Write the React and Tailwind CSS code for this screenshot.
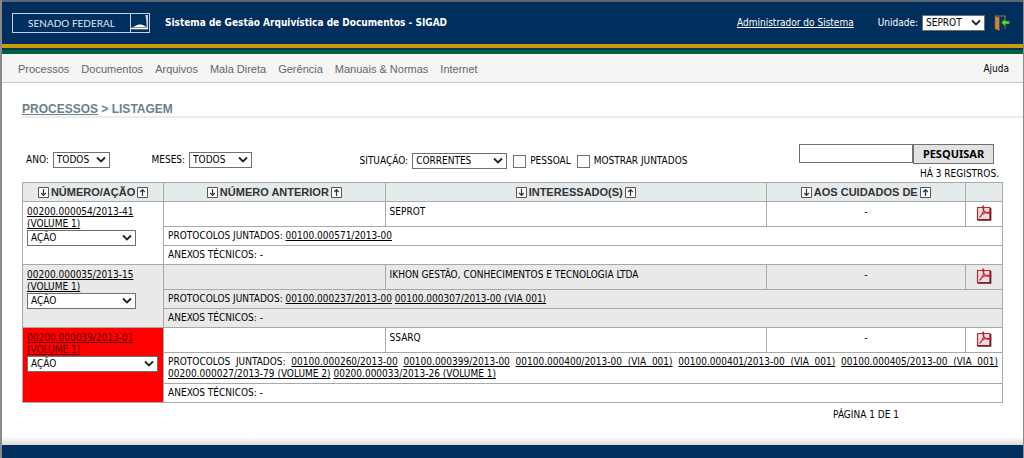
import React, { useState } from 'react';

const menuItems = ['Processos', 'Documentos', 'Arquivos', 'Mala Direta', 'Gerência', 'Manuais & Normas', 'Internet'];

const columns = ['NÚMERO/AÇÃO', 'NÚMERO ANTERIOR', 'INTERESSADO(S)', 'AOS CUIDADOS DE'];

const processos = [
  {
    numero: '00200.000054/2013-41',
    volume: '(VOLUME 1)',
    interessado: 'SEPROT',
    juntados: ['00100.000571/2013-00'],
  },
  {
    numero: '00200.000035/2013-15',
    volume: '(VOLUME 1)',
    interessado: 'IKHON GESTÃO, CONHECIMENTOS E TECNOLOGIA LTDA',
    juntados: ['00100.000237/2013-00', '00100.000307/2013-00 (VIA 001)'],
    shaded: true,
  },
  {
    numero: '00200.000039/2013-01',
    volume: '(VOLUME 1)',
    interessado: 'SSARQ',
    juntados: [
      '00100.000260/2013-00',
      '00100.000399/2013-00',
      '00100.000400/2013-00 (VIA 001)',
      '00100.000401/2013-00 (VIA 001)',
      '00100.000405/2013-00 (VIA 001)',
      '00200.000027/2013-79 (VOLUME 2)',
      '00200.000033/2013-26 (VOLUME 1)',
    ],
    urgent: true,
  },
];

const Select = ({ id, label, value, className }) => (
  <span className={`relative inline-block h-4 align-top ${className}`}>
    <select
      id={id}
      aria-label={label}
      defaultValue={value}
      className="block h-full w-full appearance-none border border-[#707070] bg-white pl-[3px] text-[10px] leading-[14px] text-black"
    >
      <option>{value}</option>
    </select>
    <svg className="pointer-events-none absolute top-1 right-1 h-2 w-[10px]" viewBox="0 0 10 8" fill="none">
      <path d="M1 1.5 5 5.5 9 1.5" stroke="#222" strokeWidth="1.8" />
    </svg>
  </span>
);

const SenadoLogo = () => (
  <div className="flex h-5 w-[138px] border border-[#c3d3e3] text-[#dfe9f2]">
    <span className="flex-1 text-center font-['Lato',sans-serif] text-[10px] leading-[18px]">SENADO FEDERAL</span>
    <svg className="h-[18px] w-[19px]" viewBox="0 0 19 18">
      <path d="M.5 0V18" stroke="#c3d3e3" />
      <path d="M2 13.2C5 13 6 10.6 10 10.6S15 13 17 13.2Z" fill="#fff" />
      <path d="M1 14.5H18" stroke="#fff" strokeWidth="1.6" />
      <path d="M15.2 1H18V14H16.6C16.5 9 16.3 4 15.2 1Z" fill="#c3d3e3" />
    </svg>
  </div>
);

const ExitIcon = () => (
  <svg className="h-4 w-4" viewBox="0 0 16 16">
    <path d="M1 1H11V14" fill="none" stroke="#8b7b63" strokeWidth="1.2" />
    <path d="M1 1 5.6 2.5V15.5L1 14Z" fill="#c98447" stroke="#8a5426" strokeWidth=".6" />
    <path d="M5.6 2.5H10.5V14H5.6Z" fill="#14304f" />
    <path d="M7.5 7.5 11 4V6.1H15.2V9H11V11Z" fill="#5fd83a" stroke="#1f8a1c" strokeWidth=".6" />
  </svg>
);

const SortIcon = ({ up }) => (
  <svg className="h-[11px] w-[11px]" viewBox="0 0 11 11" fill="none" stroke="#333">
    <path d="M.5 .5H10.5V10.5H.5Z" fill="#fff" stroke="#555" />
    <path d={up ? 'M5.5 9V3M3.2 5 5.5 2.7 7.8 5' : 'M5.5 2V8M3.2 6 5.5 8.3 7.8 6'} strokeWidth="1.2" />
  </svg>
);

const PdfIcon = () => (
  <svg className="h-4 w-4" viewBox="0 0 16 16" fill="none">
    <path d="M1.5 2.5H14V14.5H1.5Z" fill="#e6dfdf" stroke="#b42a35" strokeWidth="1.2" />
    <path d="M1.5 15H14.6V3" stroke="#6b1720" strokeWidth="1.5" />
    <path d="M3.5 12.5C6 10.5 8.3 5.5 7.7 1.8C7.2-.2 6.2 1.5 7.2 4.2C8.4 7.1 11.5 8.6 15 8.2C15.8 6.8 10 6.6 5.6 9.6" stroke="#d4192c" strokeWidth="1.1" />
  </svg>
);

const Processo = ({ item }) => {
  const bg = item.shaded ? 'bg-[#e9e9e9]' : 'bg-white';
  const cell = 'border border-[#a9a9a9] px-1';

  return (
    <tbody className={bg}>
      <tr className="h-[25px] align-top">
        <td rowSpan={3} className={`${cell} pt-1 ${item.urgent ? 'bg-[#ff0000] text-[#5a0000]' : ''}`}>
          <a href="#" className="block underline">
            {item.numero}
            <br />
            {item.volume}
          </a>
          <Select label={`Ação ${item.numero}`} value="AÇÃO" className={item.urgent ? 'w-[131px]' : 'w-[109px]'} />
        </td>
        <td className={cell}></td>
        <td className={`${cell} pt-1`}>{item.interessado}</td>
        <td className={`${cell} pt-1 text-center`}>-</td>
        <td className={`${cell} pt-[3px]`}>
          <a href="#" aria-label="Gerar PDF" className="flex justify-center">
            <PdfIcon />
          </a>
        </td>
      </tr>
      <tr>
        <td colSpan={4} className={`${cell} py-[3px] text-justify`}>
          PROTOCOLOS JUNTADOS:{' '}
          {item.juntados.map((numero) => (
            <React.Fragment key={numero}>
              <a href="#" className="underline">{numero}</a>{' '}
            </React.Fragment>
          ))}
        </td>
      </tr>
      <tr>
        <td colSpan={4} className={`${cell} py-[3px]`}>ANEXOS TÉCNICOS: -</td>
      </tr>
    </tbody>
  );
};

const App = () => {
  const [busca, setBusca] = useState('');

  return (
    <div className="border-r border-l-2 border-[#8a8a8a] bg-white font-['DejaVu_Sans_Condensed','Noto_Sans',sans-serif] text-[10px] leading-3 text-black">
      <header>
        <div className="flex h-11 items-center border-t-2 border-[#5c6570] bg-[#002f5d] pr-[13px] pl-[10px] text-white">
          <SenadoLogo />
          <h1 className="ml-[15px] font-bold">
            Sistema de Gestão Arquivística de Documentos - SIGAD
          </h1>
          <a href="#" className="mr-6 ml-auto underline">Administrador do Sistema</a>
          <label htmlFor="unidade" className="mr-1">Unidade:</label>
          <Select id="unidade" value="SEPROT" className="w-[63px]" />
          <a href="#" aria-label="Sair" className="ml-[9px]">
            <ExitIcon />
          </a>
        </div>
        <div className="h-1 bg-[#cc9a06]"></div>
        <div className="h-[2px] bg-[#003a55]"></div>
        <div className="h-1 bg-[#006040]"></div>
        <nav className="flex h-[29px] items-center gap-3 border-b border-[#c8c8c8] bg-[#f5f5f5] pt-px pr-[14px] pl-4 font-['Liberation_Sans',sans-serif] text-[11px] text-[#666]">
          {menuItems.map((item) => (
            <a key={item} href="#">{item}</a>
          ))}
          <a href="#" className="ml-auto font-['DejaVu_Sans_Condensed','Noto_Sans',sans-serif] text-[10px] text-black">Ajuda</a>
        </nav>
      </header>

      <main className="pr-5 pl-5">
        <h2 className="-mr-5 border-b-2 border-[#ebebeb] pt-5 pb-px font-['Liberation_Sans',sans-serif] text-[12px] font-bold text-[#6a7f8b]">
          <a href="#" className="underline">PROCESSOS</a> &gt; LISTAGEM
        </h2>

        <form className="flex h-16 items-start pt-[26px]" onSubmit={(e) => e.preventDefault()}>
          <div className="flex w-[13%] items-center gap-1 pt-2 pl-1">
            <label htmlFor="ano">ANO:</label>
            <Select id="ano" value="TODOS" className="w-[57px]" />
          </div>
          <div className="flex w-[21%] items-center gap-1 pt-2 pl-[2px]">
            <label htmlFor="meses">MESES:</label>
            <Select id="meses" value="TODOS" className="w-[63px]" />
          </div>
          <div className="flex items-center gap-1 pt-[9px] pl-1">
            <label htmlFor="situacao">SITUAÇÃO:</label>
            <Select id="situacao" value="CORRENTES" className="w-[95px]" />
            <input id="pessoal" type="checkbox" className="ml-[2px] h-[13px] w-[13px] appearance-none border border-[#707070] bg-white checked:bg-[#002f5d]" />
            <label htmlFor="pessoal">PESSOAL</label>
            <input id="juntados" type="checkbox" className="ml-[2px] h-[13px] w-[13px] appearance-none border border-[#707070] bg-white checked:bg-[#002f5d]" />
            <label htmlFor="juntados">MOSTRAR JUNTADOS</label>
          </div>
          <div className="ml-auto">
            <div className="mr-[9px] flex">
              <input
                type="text"
                aria-label="Pesquisar"
                value={busca}
                onChange={(e) => setBusca(e.target.value)}
                className="h-[19px] w-[114px] border border-[#707070] bg-white px-1"
              />
              <button type="submit" className="h-5 w-[81px] border border-[#707070] bg-[#e2e2e2] font-['Noto_Sans',sans-serif] text-[11px] font-bold">
                PESQUISAR
              </button>
            </div>
            <p className="mt-1 mr-1 text-right">HÁ 3 REGISTROS.</p>
          </div>
        </form>

        <table className="w-full table-fixed border-collapse">
          <colgroup>
            <col className="w-[14.4%]" />
            <col className="w-[22.6%]" />
            <col className="w-[38.9%]" />
            <col className="w-[20.3%]" />
            <col className="w-[3.8%]" />
          </colgroup>
          <thead>
            <tr className="h-[19px] bg-[#e5eaed] font-['Liberation_Sans',sans-serif] text-[11px] text-[#333]">
              {columns.map((column) => (
                <th key={column} className="border border-[#a9a9a9] p-0 font-bold">
                  <div className="flex items-center justify-center gap-[2px]">
                    <button type="button" aria-label={`${column} decrescente`}><SortIcon /></button>
                    {column}
                    <button type="button" aria-label={`${column} crescente`}><SortIcon up /></button>
                  </div>
                </th>
              ))}
              <th className="border border-[#a9a9a9] p-0"></th>
            </tr>
          </thead>
          {processos.map((item) => (
            <Processo key={item.numero} item={item} />
          ))}
        </table>

        <p className="mt-[6px] mr-[104px] text-right">PÁGINA 1 DE 1</p>
      </main>

      <footer className="mt-4">
        <div className="h-2 bg-linear-to-b from-white to-[#d9d9d9]"></div>
        <div className="h-[14px] bg-[#002f5d]"></div>
      </footer>
    </div>
  );
};

export default App;
